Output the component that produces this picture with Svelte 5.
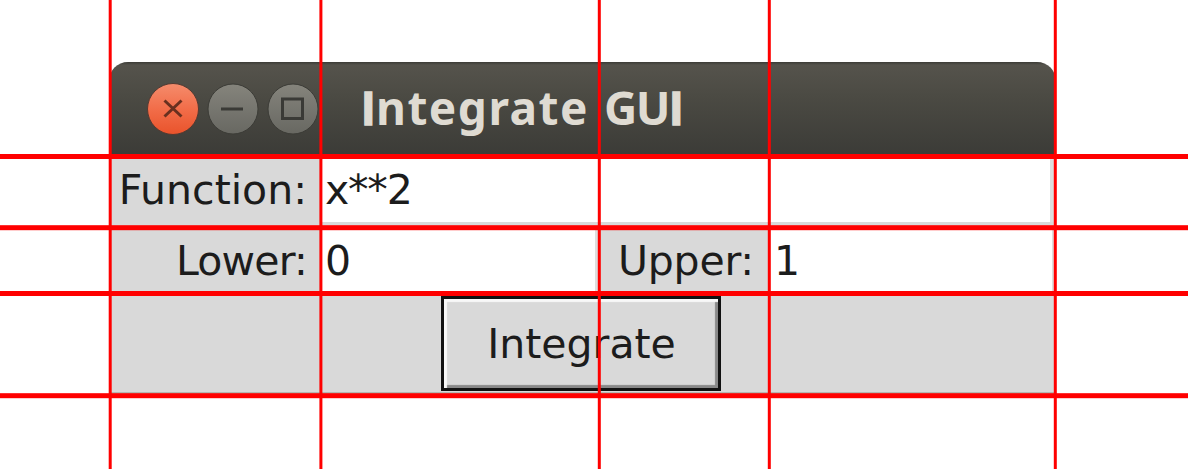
<script>
  const columns = [108.7, 319.4, 597.8, 767.8, 1053.8];
  const rows = [154, 225.2, 291, 393.2];
  let expression = 'x**2';
  let lower = '0';
  let upper = '1';
</script>

<main class="stage">
  <section class="window">
    <header class="titlebar">
      <div class="controls">
        <svg width="52" height="52" viewBox="0 0 52 52">
          <defs>
            <linearGradient id="close" x1="0" y1="0" x2="0" y2="1">
              <stop offset="0" stop-color="#f58c6c" />
              <stop offset="0.5" stop-color="#f26d49" />
              <stop offset="1" stop-color="#e9532b" />
            </linearGradient>
          </defs>
          <circle cx="26" cy="26" r="25.5" fill="url(#close)" stroke="#533a32" stroke-width="1" />
          <path d="M17.5 17.5 L34.5 33.5 M34.5 17.5 L17.5 33.5" stroke="#69301f" stroke-width="3" />
        </svg>
        <svg width="52" height="52" viewBox="0 0 52 52">
          <defs>
            <linearGradient id="plain" x1="0" y1="0" x2="0" y2="1">
              <stop offset="0" stop-color="#85847c" />
              <stop offset="1" stop-color="#686862" />
            </linearGradient>
          </defs>
          <circle cx="26" cy="26" r="25" fill="url(#plain)" stroke="#3c3c37" stroke-width="1" />
          <path d="M14 26 H36" stroke="#3a3a36" stroke-width="3" />
        </svg>
        <svg width="52" height="52" viewBox="0 0 52 52">
          <circle cx="26" cy="26" r="25" fill="url(#plain)" stroke="#3c3c37" stroke-width="1" />
          <rect x="15.5" y="16" width="20" height="19.5" fill="none" stroke="#3a3a36" stroke-width="3" />
        </svg>
      </div>
      <h1><span class="stem">I</span><span class="word">ntegrate</span><span class="caps">GU</span><span class="stem">I</span></h1>
    </header>

    <div class="form">
      <span class="label">Function:</span>
      <div class="entry wide">{expression}</div>
      <span class="label tight">Lower:</span>
      <div class="entry low">{lower}</div>
      <span class="label up">Upper:</span>
      <div class="entry low">{upper}</div>
    </div>

    <footer>
      <button>Integrate</button>
    </footer>
  </section>

  <svg class="guides" width="1188" height="469" viewBox="0 0 1188 469">
    {#each columns as x}
      <rect {x} y="0" width="3" height="469" fill="#f00" />
    {/each}
    {#each rows as y}
      <rect x="0" {y} width="1188" height="5" fill="#f00" />
    {/each}
  </svg>
</main>

<style>
  .stage {
    position: relative;
    box-sizing: border-box;
    width: 1188px;
    height: 469px;
    padding: 62px 0 0 109px;
    background: #fff;
    overflow: hidden;
    font-family: 'DejaVu Sans', sans-serif;
    font-size: 41px;
    color: #1c1c1c;
  }
  .window {
    width: 947px;
    height: 332px;
    display: flex;
    flex-direction: column;
    background: #d9d9d9;
    border-radius: 19px 19px 0 0;
    overflow: hidden;
  }
  .titlebar {
    display: flex;
    align-items: center;
    box-sizing: border-box;
    height: 94px;
    padding-left: 38px;
    background: linear-gradient(#3b3b36 0, #55534c 3px, #4b4a43 35px, #3b3b37 100%);
  }
  .controls {
    display: flex;
    gap: 8px;
    width: 172px;
  }
  h1 {
    display: flex;
    align-items: baseline;
    margin: -3px 0 0 43px;
    font: 700 46px/60px 'Noto Sans', sans-serif;
    color: #dfdbd2;
    white-space: nowrap;
  }
  .stem {
    width: 14px;
    font-family: Inter, sans-serif;
    font-size: 45px;
    -webkit-text-stroke: 1.5px #dfdbd2;
  }
  .word {
    width: 228px;
    letter-spacing: 1.5px;
  }
  .caps {
    width: 66px;
    letter-spacing: -1.6px;
  }
  .form {
    display: grid;
    grid-template-columns: 211px 279px 170px 287px;
    grid-template-rows: 71px 66px;
  }
  .label {
    box-sizing: border-box;
    padding-right: 13px;
    text-align: right;
    line-height: 68px;
    white-space: nowrap;
  }
  .tight {
    letter-spacing: -0.8px;
  }
  .up {
    padding-right: 15px;
    letter-spacing: -0.2px;
  }
  .label,
  .entry {
    height: 66px;
  }
  .entry {
    box-sizing: border-box;
    padding-left: 4px;
    line-height: 64px;
    letter-spacing: -1.2px;
    background: #fff;
    border: solid #c9c9c9;
    border-width: 2px 6px 0 1px;
    border-right-color: #dedede;
  }
  .low {
    border-right-width: 4px;
  }
  .wide {
    grid-column: 2 / 5;
  }
  footer {
    display: flex;
    box-sizing: border-box;
    height: 101px;
    padding: 3px 0 0 332px;
    border-bottom: 2px solid #b5b6b0;
  }
  button {
    box-sizing: border-box;
    width: 280px;
    height: 95px;
    padding: 0 0 0 1px;
    border: 3px solid #111;
    border-radius: 0;
    background: #d9d9d9;
    box-shadow: inset 3px 3px 1px #f8f8f8, inset -3px -3px 1px #888;
    font: inherit;
    color: inherit;
  }
  .guides {
    position: absolute;
    inset: 0;
  }
</style>
